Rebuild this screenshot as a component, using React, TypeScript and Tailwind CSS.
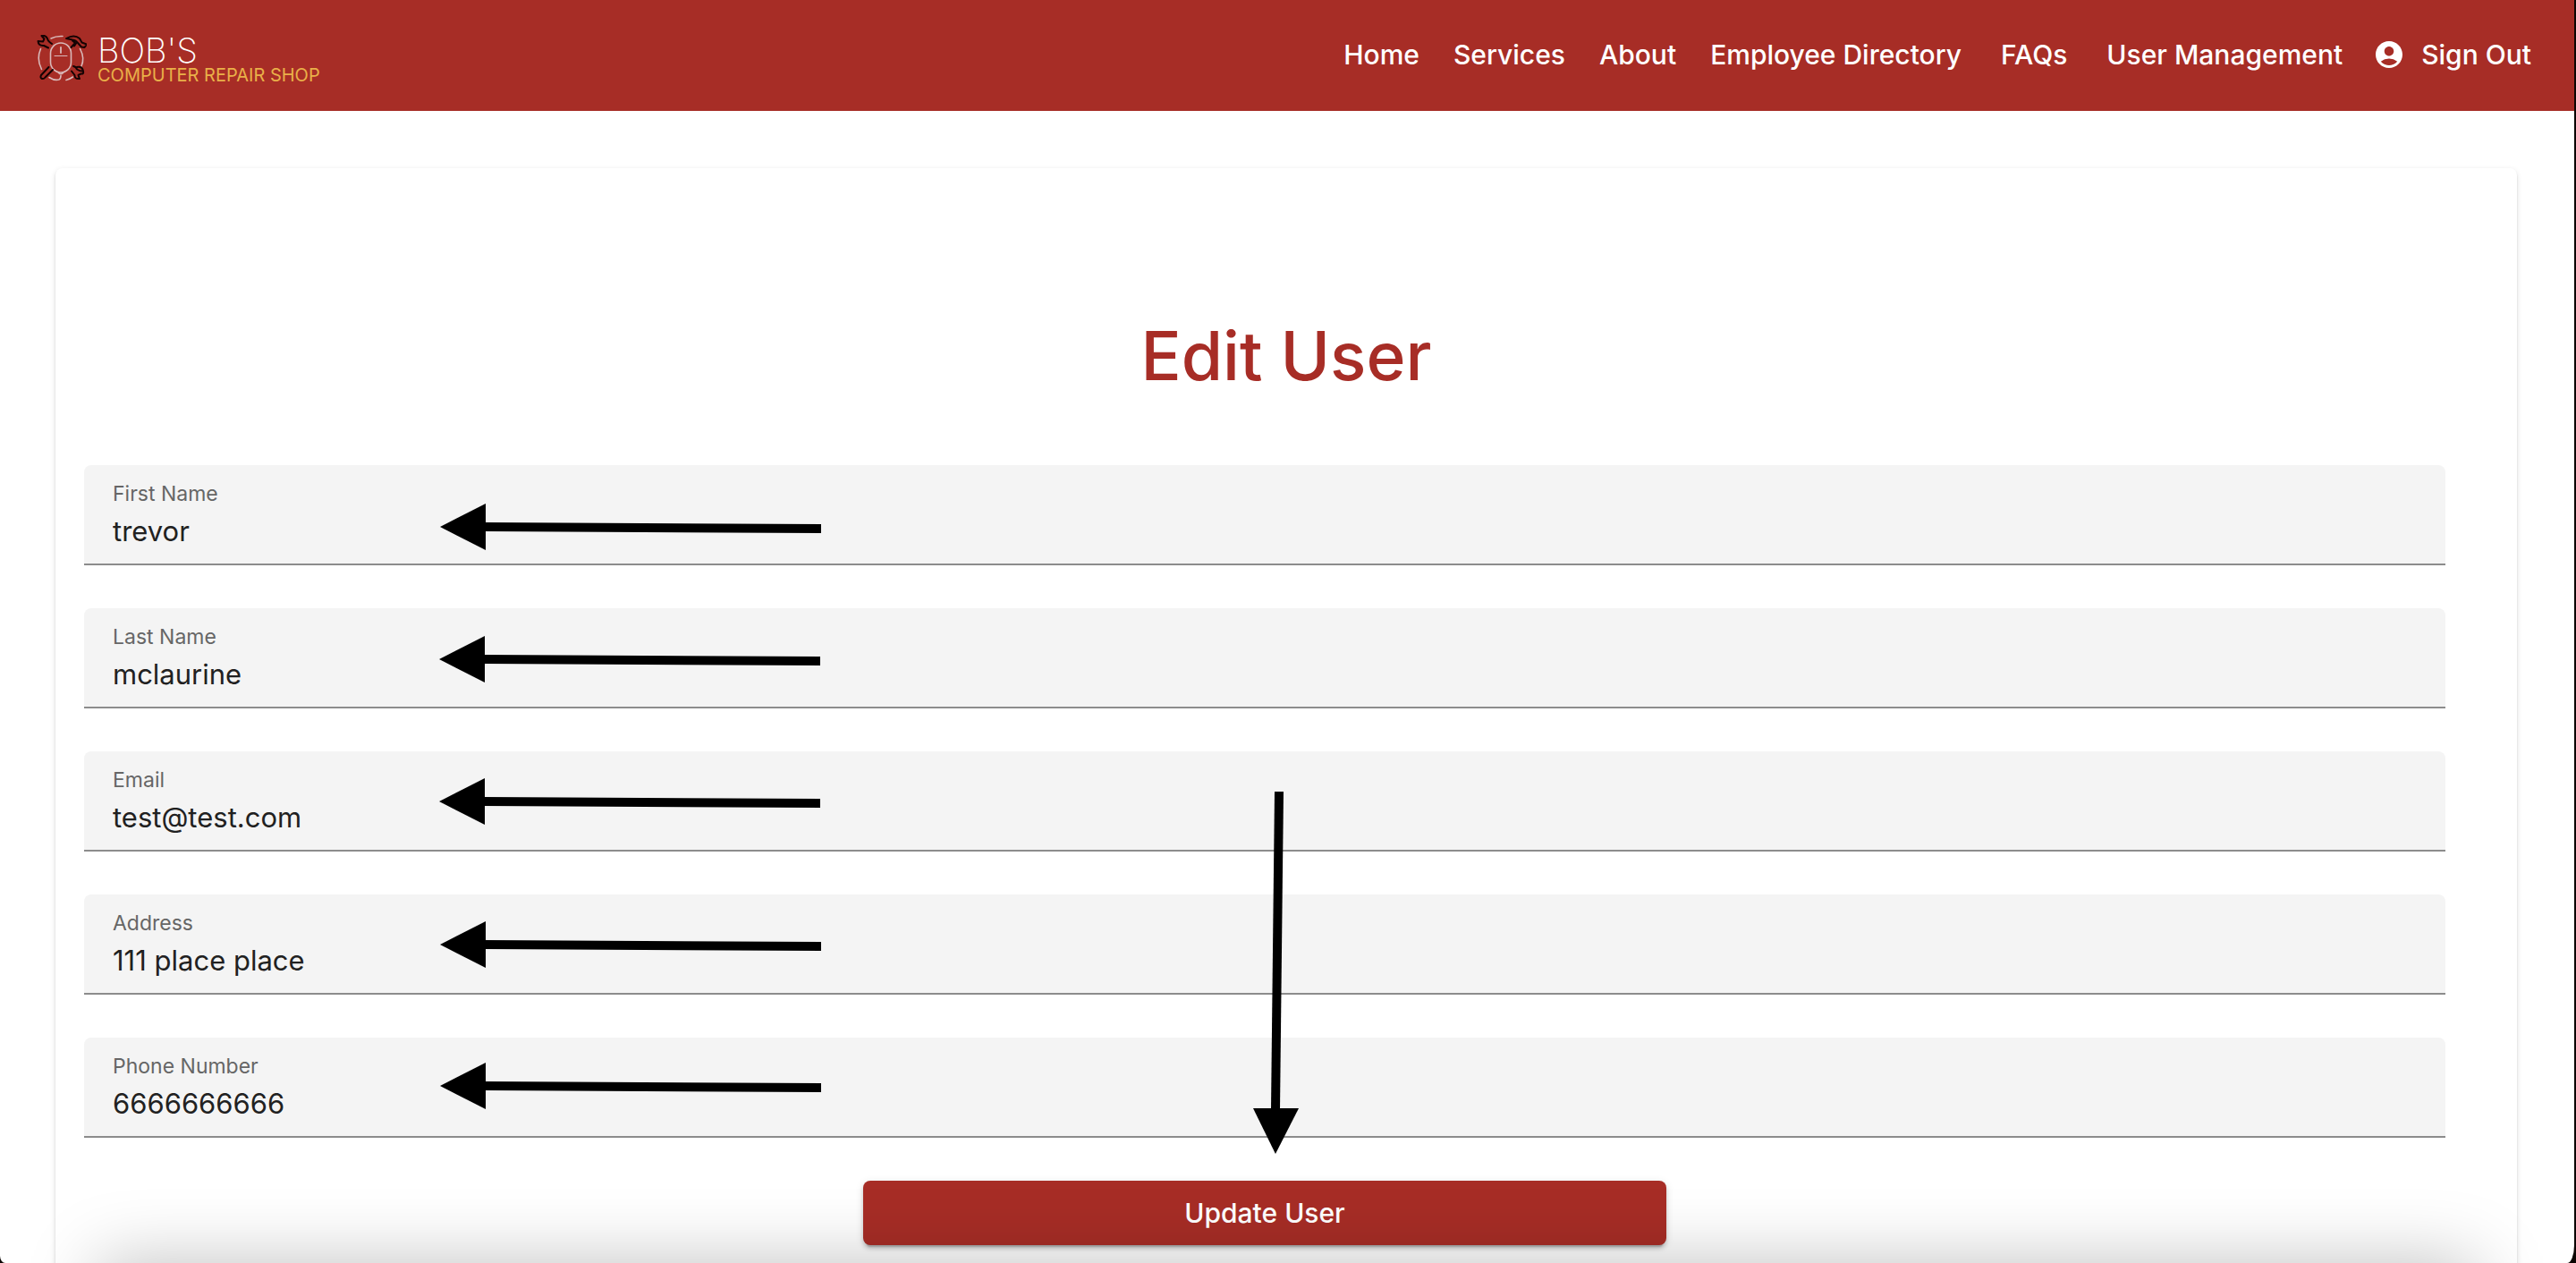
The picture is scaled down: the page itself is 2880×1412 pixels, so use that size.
import { MdAccountCircle } from "react-icons/md";

const links = ["Home", "Services", "About", "Employee Directory"];

const fields = [
  { id: "firstName", label: "First Name", type: "text", value: "trevor" },
  { id: "lastName", label: "Last Name", type: "text", value: "mclaurine" },
  { id: "email", label: "Email", type: "email", value: "test@test.com" },
  { id: "address", label: "Address", type: "text", value: "111 place place" },
  { id: "phone", label: "Phone Number", type: "tel", value: "6666666666" },
];

const arrows = [
  { x: 492, y: 589 },
  { x: 491, y: 737 },
  { x: 491, y: 896 },
  { x: 492, y: 1056 },
  { x: 492, y: 1214 },
];

function LogoMark() {
  return (
    <svg viewBox="0 0 56 54" className="h-[54px] w-14" fill="none" strokeLinecap="round" strokeLinejoin="round" aria-hidden="true">
      <g stroke="#d9b9b9" strokeWidth="1.6">
        <path d="M16 4Q22 1 29 1.500" />
        <path d="M4.500 15.500Q-.5 27 5.500 38.500" />
        <path d="M48.500 15.500Q54 26 50 35" />
        <path d="M14 47.500Q20 51.500 25 50Q27 49 27 45.500" />
        <path d="M33 50.500Q37 49.500 40.500 47" />
        <rect x="15.500" y="9" width="23" height="33" rx="11.500" />
        <path d="M20 23.500H34" strokeWidth="1" />
        <path d="M27 14V20" strokeWidth="1.800" />
        <path d="M24.500 42.500Q27 45 29.500 42.500" />
      </g>
      <g stroke="#140303" strokeWidth="2">
        <path d="M5.500 1Q10 0 12 4Q12 6.500 17 10M5.500 1L8.500 4.500L7 7.500L1.500 7Q2 12.500 8 12L13 14.500" />
        <path d="M33 4Q42 -1 48 4L50.500 8.500L56 10.500L53.500 14L50 13.500L46 9Q44 6 40 5.500ZM40 6.500L43 9L38.500 14M44 9.500L42 12.500" />
        <path d="M13.500 36L5 45Q3.500 48 6 49Q8 49.500 9.500 47.500L18 39" />
        <path d="M41 35Q44 35.500 45 38.500Q49 41 52 40.500Q53 44 49.500 43.500L46.500 45L48 49Q42 49.500 42.500 45L39 40.500M45 36Q51 35 52 40.500" />
      </g>
    </svg>
  );
}

function Header() {
  return (
    <header className="flex h-[124px] items-center justify-between bg-[#a72d26] pr-12 pl-[41px] text-white">
      <a href="#home" className="mt-2 flex items-center gap-3">
        <LogoMark />
        <span className="flex flex-col">
          <span className="text-[38px] leading-9 font-extralight">BOB&apos;S</span>
          <span className="text-[20px] leading-5 text-[#e9b049]">COMPUTER REPAIR SHOP</span>
        </span>
      </a>
      <nav className="mb-0.5 flex items-center gap-11 text-[30px] leading-10 font-medium">
        <div className="flex gap-[38px]">
          {links.map((link) => (
            <a key={link} href="#nav">{link}</a>
          ))}
        </div>
        <a href="#faqs">FAQs</a>
        <div className="flex items-center gap-[34px]">
          <a href="#users">User Management</a>
          <button type="button" className="flex items-center gap-[18px]">
            <MdAccountCircle className="size-9" />
            Sign Out
          </button>
        </div>
      </nav>
    </header>
  );
}

function Annotations() {
  return (
    <svg className="pointer-events-none absolute inset-0 h-full w-full" aria-hidden="true">
      {arrows.map(({ x, y }) => (
        <g key={y} transform={`translate(${x} ${y})`}>
          <path d="M0 0L51-26V26Z" />
          <path d="M50-5L426-3V7L50 5Z" />
        </g>
      ))}
      <path d="M1425 885H1435L1431 1241H1421Z" />
      <path d="M1401 1239H1452L1426 1290Z" />
    </svg>
  );
}

export default function App() {
  return (
    <div className="h-screen overflow-hidden bg-[#0b0502] pr-0.5 font-[Inter,sans-serif]">
      <div className="relative h-full overflow-hidden bg-white [border-bottom-left-radius:6px_8px] [border-bottom-right-radius:8px_20px]">
        <Header />
        <main className="mr-16 ml-[62px] mt-16 h-full rounded-lg bg-white px-8 pt-40 shadow-[0_4px_2px_-2px_rgba(0,0,0,0.2),0_2px_2px_0_rgba(0,0,0,0.14),0_2px_6px_0_rgba(0,0,0,0.12)]">
          <h1 className="mb-[72px] text-center text-[75px] leading-[100px] font-medium text-[#a72d26]">Edit User</h1>
          <form className="mr-12 flex flex-col gap-12">
            {fields.map((field) => (
              <div key={field.id} className="flex h-28 flex-col rounded-t-lg border-b-2 border-[#8c8c8c] bg-[#f4f4f4] px-8 pt-4">
                <label htmlFor={field.id} className="text-[23px] leading-8 text-[#666666]">{field.label}</label>
                <input
                  id={field.id}
                  type={field.type}
                  defaultValue={field.value}
                  className="h-[50px] w-full bg-transparent text-[31px] text-[#212121] outline-none"
                />
              </div>
            ))}
            <button
              type="button"
              className="h-[72px] w-[34%] self-center rounded-lg bg-[#a72d26] text-[30px] font-medium text-white shadow-[0_6px_2px_-4px_rgba(0,0,0,0.2),0_4px_4px_0_rgba(0,0,0,0.14),0_2px_10px_0_rgba(0,0,0,0.12)]"
            >
              Update User
            </button>
          </form>
        </main>
        <div className="pointer-events-none absolute inset-x-[110px] top-full h-40 shadow-[0_0_80px_rgba(0,0,0,0.25)]" />
        <Annotations />
      </div>
    </div>
  );
}
